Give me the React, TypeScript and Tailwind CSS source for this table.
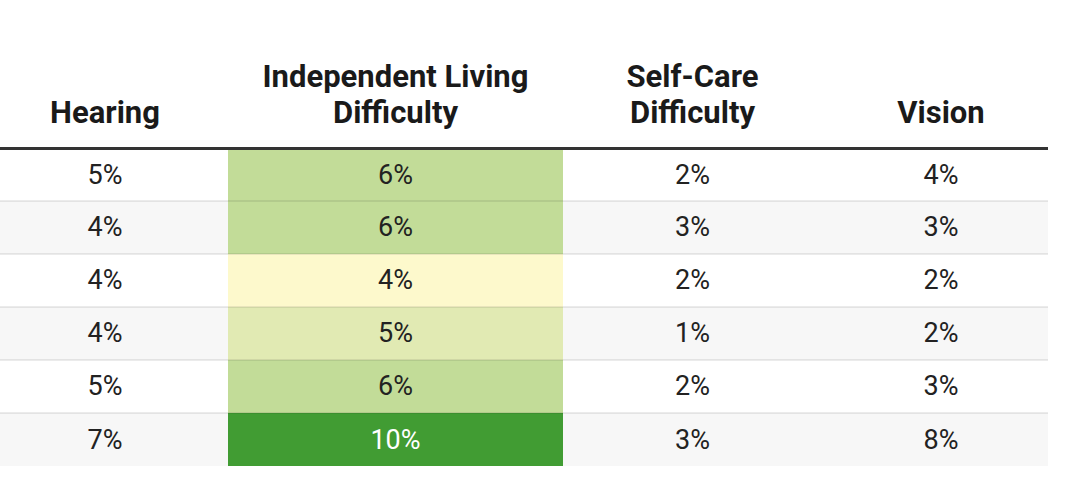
const rows = [
  { hearing: "5%", living: "6%", care: "2%", vision: "4%", shade: "bg-[#c2dc98]" },
  { hearing: "4%", living: "6%", care: "3%", vision: "3%", shade: "bg-[#c2dc98]" },
  { hearing: "4%", living: "4%", care: "2%", vision: "2%", shade: "bg-[#fdf9cc]" },
  { hearing: "4%", living: "5%", care: "1%", vision: "2%", shade: "bg-[#e1eab3]" },
  { hearing: "5%", living: "6%", care: "2%", vision: "3%", shade: "bg-[#c2dc98]" },
  { hearing: "7%", living: "10%", care: "3%", vision: "8%", shade: "bg-[#419c33] text-white" },
];

export default function App() {
  return (
    <div className="w-[1068px] h-[485px] bg-white font-['Roboto',sans-serif] text-[#222]">
      <table className="w-[1048px] table-fixed border-collapse">
        <colgroup>
          <col className="w-[228px]" />
          <col className="w-[335px]" />
          <col className="w-[263px]" />
          <col className="w-[222px]" />
        </colgroup>
        <thead>
          <tr className="h-[148px] border-b-[3px] border-[#333] text-[31px] leading-[36px] font-bold text-[#1a1a1a]">
            <th className="align-bottom pb-[16px] pr-[18px] font-bold">Hearing</th>
            <th className="align-bottom pb-[16px] font-bold">
              Independent Living
              <br />
              Difficulty
            </th>
            <th className="align-bottom pb-[16px] pr-[4px] font-bold">
              Self-Care
              <br />
              Difficulty
            </th>
            <th className="align-bottom pb-[16px] pl-[8px] font-bold">Vision</th>
          </tr>
        </thead>
        <tbody className="text-[27px] text-center">
          {rows.map((r, i) => (
            <tr
              key={i}
              className={`${i % 2 === 1 ? "bg-[#f7f7f7]" : "bg-white"} ${
                i === 0 ? "h-[53px]" : "h-[53px] border-t-2 border-[rgba(0,0,0,0.08)]"
              }`}
            >
              <td className="pr-[18px]">{r.hearing}</td>
              <td className={r.shade}>{r.living}</td>
              <td className="pr-[4px]">{r.care}</td>
              <td className="pl-[8px]">{r.vision}</td>
            </tr>
          ))}
        </tbody>
      </table>
    </div>
  );
}
